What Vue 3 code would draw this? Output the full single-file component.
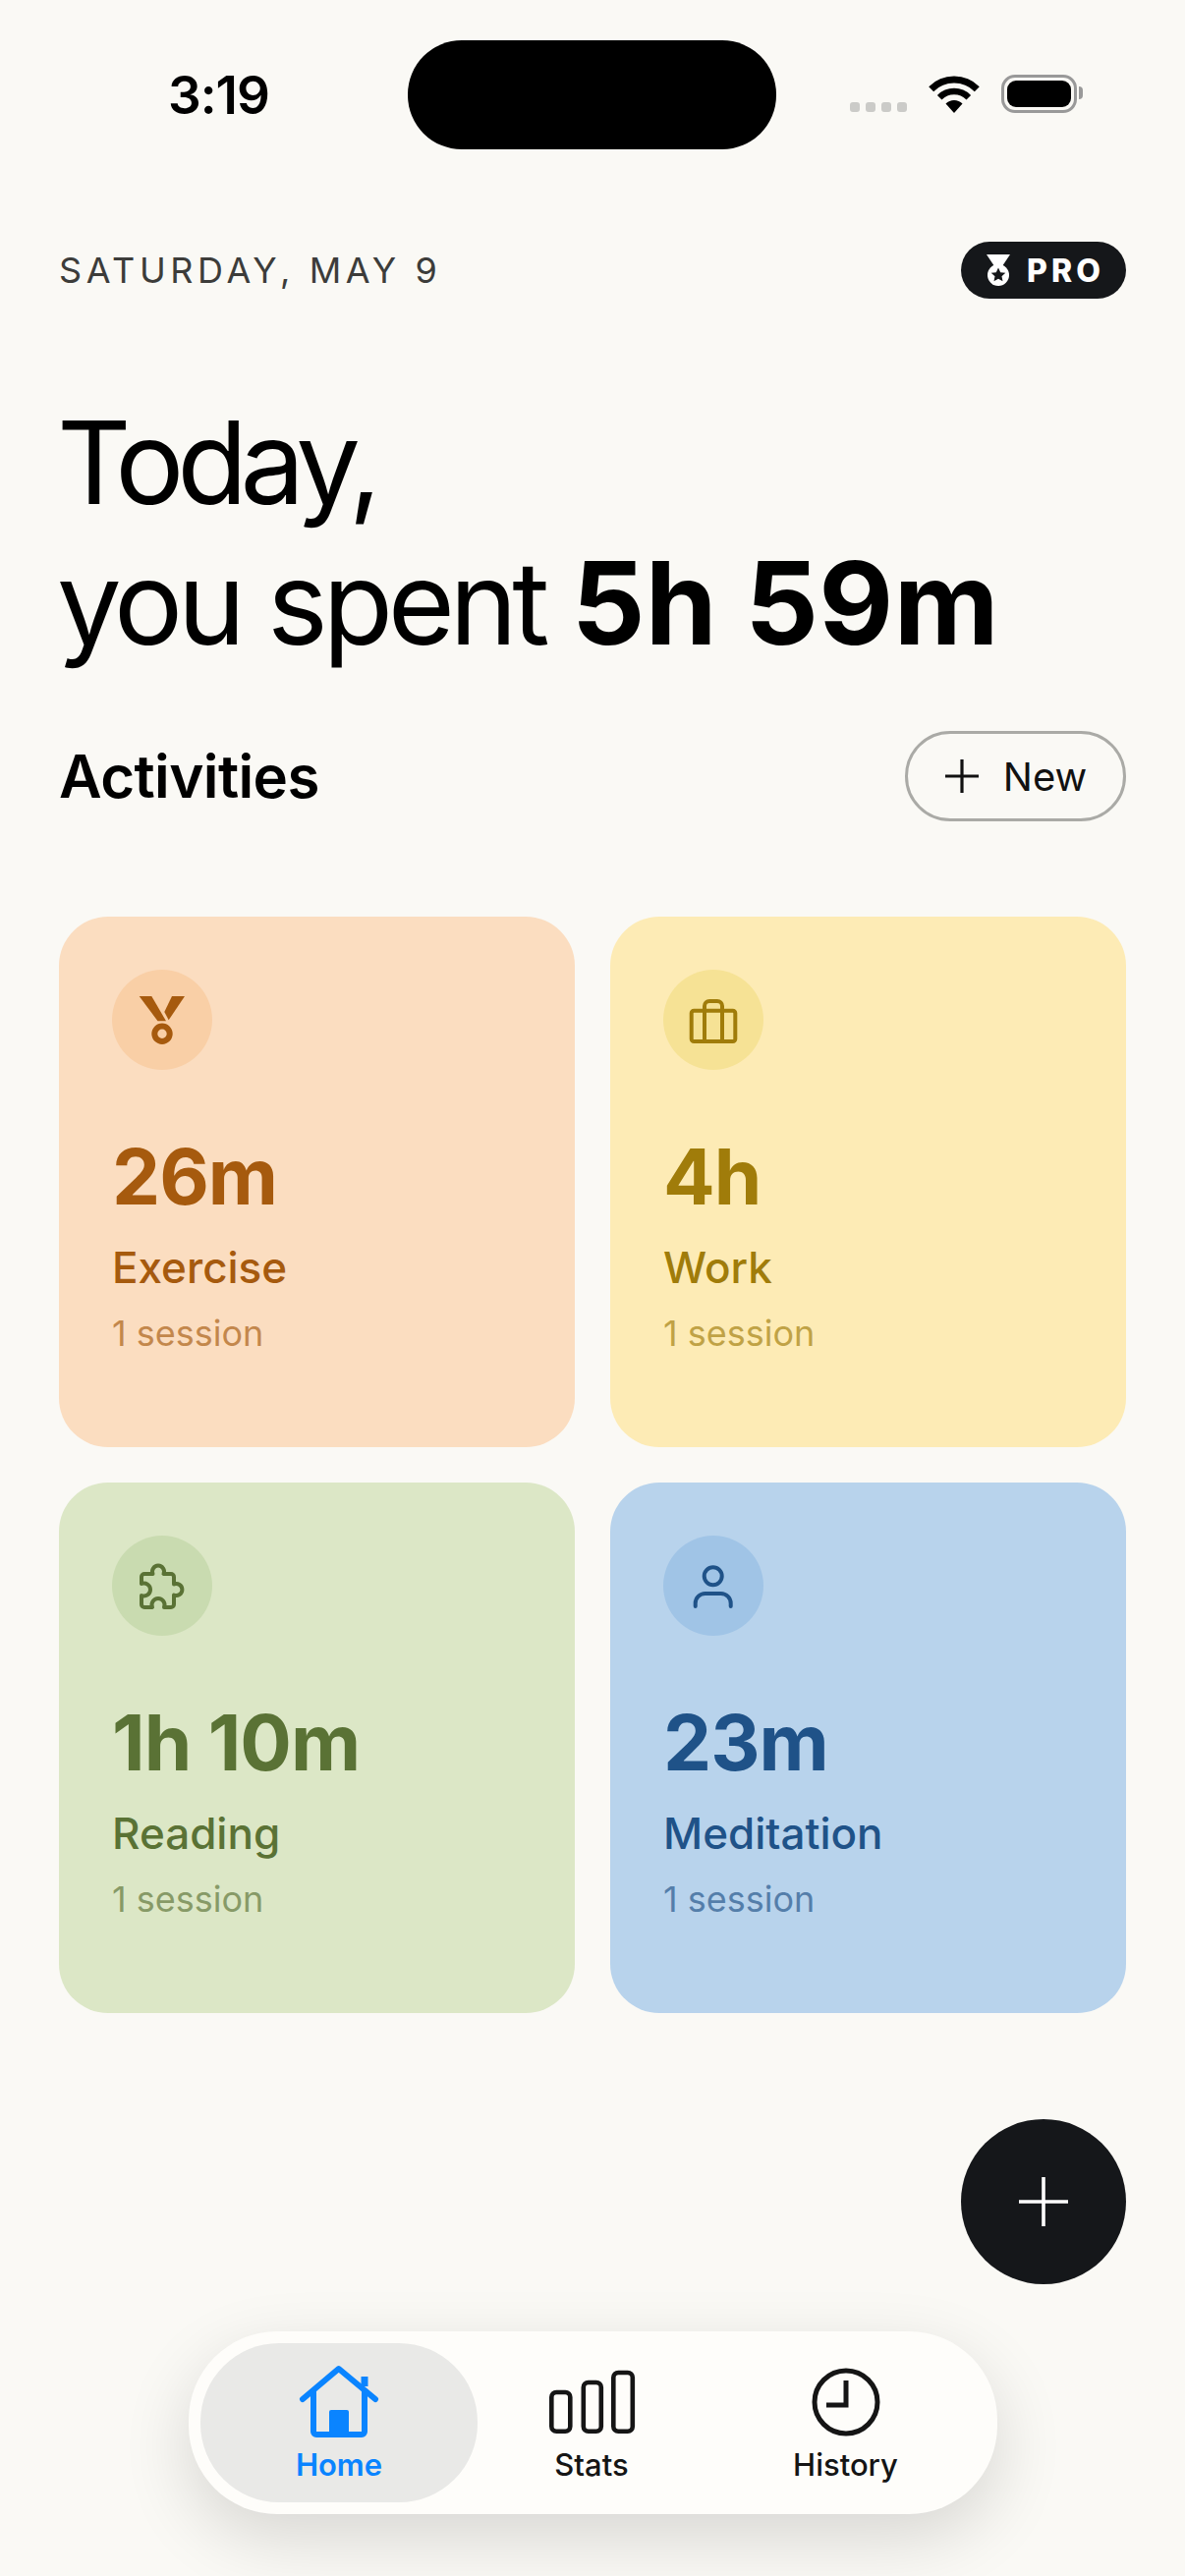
<template>
  <div class="screen">
    <div class="status-bar">
      <span class="time">3:19</span>
      <div class="island"></div>
      <div class="status-right">
        <div class="signal"><i></i><i></i><i></i><i></i></div>
        <svg class="wifi" width="52" height="38" viewBox="0 0 52 38">
          <path d="M2.7 13.7A33 33 0 0 1 49.3 13.7" fill="none" stroke="#000" stroke-width="7" />
          <path d="M11.2 22.2A21 21 0 0 1 40.8 22.2" fill="none" stroke="#000" stroke-width="6.5" />
          <path d="M26 38L17.5 28.5A12 12 0 0 1 34.5 28.5Z" fill="#000" />
        </svg>
        <div class="battery"><div class="battery-level"></div><div class="battery-nub"></div></div>
      </div>
    </div>

    <header class="date-row">
      <span class="date">SATURDAY, MAY 9</span>
      <div class="pro-badge">
        <svg width="24" height="32" viewBox="0 0 24 32">
          <path d="M0 0H24L16 12H8Z" fill="#fff" />
          <circle cx="12" cy="21" r="11" fill="#fff" />
          <path d="M12 13.5l2.2 4.7 5.1.6-3.8 3.4 1 5-4.5-2.5-4.5 2.5 1-5-3.8-3.4 5.1-.6z" fill="#15171a" />
        </svg>
        <span>PRO</span>
      </div>
    </header>

    <h1 class="headline"><span class="today">Today,</span><br />you spent <strong>5h 59m</strong></h1>

    <div class="section-row">
      <h2 class="section-title">Activities</h2>
      <button class="new-btn">
        <svg width="36" height="36" viewBox="0 0 36 36">
          <path d="M18 1V35M1 18H35" stroke="#111" stroke-width="3.2" fill="none" />
        </svg>
        New
      </button>
    </div>

    <div class="cards">
      <div v-for="card in cards" :key="card.name" class="card" :class="card.theme">
        <div class="card-icon">
          <svg v-if="card.theme === 'exercise'" width="60" height="60" viewBox="0 0 60 60">
            <path d="M6.7 6H19.3L34 31.3H25.5Z" fill="currentColor" />
            <path d="M40 6H53L36.7 30.3L32.3 22Z" fill="currentColor" />
            <circle cx="30" cy="44.3" r="7.7" fill="none" stroke="currentColor" stroke-width="6" />
          </svg>
          <svg v-else-if="card.theme === 'work'" width="60" height="60" viewBox="0 0 60 60" fill="none" stroke="currentColor" stroke-width="4">
            <rect x="7.7" y="20.7" width="44.6" height="31.3" rx="2.5" />
            <path d="M21 52V16a5 5 0 0 1 5-5h8a5 5 0 0 1 5 5V52" />
          </svg>
          <svg v-else-if="card.theme === 'reading'" width="60" height="60" viewBox="0 0 60 60" fill="none" stroke="currentColor" stroke-width="4" stroke-linejoin="round">
            <path d="M12 18h8.5a6 6 0 1 1 11 0H39a3 3 0 0 1 3 3v7.5a6 6 0 1 1 0 11V49a3 3 0 0 1-3 3H32a6.5 6.5 0 1 0-12 0H12a3 3 0 0 1-3-3V40a6.5 6.5 0 1 0 0-12V21a3 3 0 0 1 3-3z" />
          </svg>
          <svg v-else width="60" height="60" viewBox="0 0 60 60" fill="none" stroke="currentColor" stroke-width="4" stroke-linecap="round">
            <circle cx="29.7" cy="20.3" r="9" />
            <path d="M11.7 51V48a10 10 0 0 1 10-10h16a10 10 0 0 1 10 10v3" />
          </svg>
        </div>
        <div class="card-value">{{ card.value }}</div>
        <div class="card-name">{{ card.name }}</div>
        <div class="card-sessions">{{ card.sessions }}</div>
      </div>
    </div>

    <button class="fab">
      <svg width="54" height="54" viewBox="0 0 54 54">
        <path d="M27 2V52M2 27H52" stroke="#fff" stroke-width="3.6" fill="none" />
      </svg>
    </button>

    <nav class="tabbar">
      <div class="tab active">
        <svg width="90" height="80" viewBox="0 0 90 80" fill="none" stroke="#0a84ff" stroke-width="6" stroke-linecap="round" stroke-linejoin="round">
          <path d="M8 37L44.7 6L82 37" />
          <path d="M19 30V70a3 3 0 0 0 3 3H68a3 3 0 0 0 3-3V30" />
          <path d="M71 14V24" stroke-linecap="butt" stroke-width="7" />
          <rect x="35" y="48" width="20" height="26" rx="2" fill="#0a84ff" stroke="none" />
        </svg>
        <span>Home</span>
      </div>
      <div class="tab">
        <svg width="95" height="80" viewBox="0 0 95 80" fill="none" stroke="#151515" stroke-width="4.6">
          <rect x="6.3" y="30" width="19" height="39.8" rx="5" />
          <rect x="38.8" y="20" width="18" height="49.8" rx="5" />
          <rect x="69.3" y="10" width="19.5" height="59.8" rx="5" />
        </svg>
        <span>Stats</span>
      </div>
      <div class="tab">
        <svg width="80" height="80" viewBox="0 0 80 80" fill="none" stroke="#151515" stroke-width="5">
          <circle cx="40" cy="40" r="32" />
          <path d="M40 18V43H20" />
        </svg>
        <span>History</span>
      </div>
    </nav>
  </div>
</template>

<script setup>
const cards = [
  { theme: 'exercise', value: '26m', name: 'Exercise', sessions: '1 session' },
  { theme: 'work', value: '4h', name: 'Work', sessions: '1 session' },
  { theme: 'reading', value: '1h 10m', name: 'Reading', sessions: '1 session' },
  { theme: 'meditation', value: '23m', name: 'Meditation', sessions: '1 session' },
]
</script>

<style>
html, body {
  margin: 0;
  background: #faf9f5;
}
</style>

<style scoped>
.screen {
  position: relative;
  width: 1206px;
  height: 2622px;
  overflow: hidden;
  background: #faf9f5;
  font-family: Inter, "Liberation Sans", sans-serif;
  color: #000;
}

.status-bar {
  display: flex;
  align-items: center;
  height: 111px;
  padding: 41px 0 0 171px;
}

.time {
  width: 244px;
  font-size: 53px;
  font-weight: 600;
  letter-spacing: -1px;
}

.island {
  width: 375px;
  height: 111px;
  border-radius: 55px;
  background: #000;
}

.status-right {
  display: flex;
  align-items: flex-end;
  margin-left: 75px;
  margin-top: -3px;
}

.signal {
  display: flex;
  gap: 6px;
  margin-right: 22px;
  margin-bottom: 1px;
}

.signal i {
  width: 10px;
  height: 10px;
  border-radius: 3px;
  background: #cbcbc8;
}

.wifi {
  margin-right: 22px;
}

.battery {
  position: relative;
  box-sizing: border-box;
  width: 77px;
  height: 39px;
  padding: 3px;
  border: 3px solid #999;
  border-radius: 14px;
}

.battery-level {
  height: 100%;
  border-radius: 9px;
  background: #000;
}

.battery-nub {
  position: absolute;
  right: -9px;
  top: 9px;
  width: 4px;
  height: 13px;
  border-radius: 0 4px 4px 0;
  background: #999;
}

.date-row {
  display: flex;
  align-items: center;
  justify-content: space-between;
  height: 58px;
  margin-top: 94px;
  padding: 0 60px;
}

.date {
  font-size: 36px;
  letter-spacing: 4.6px;
  color: #3c3c3a;
}

.pro-badge {
  display: flex;
  align-items: center;
  justify-content: center;
  gap: 17px;
  box-sizing: border-box;
  width: 168px;
  height: 58px;
  padding-left: 4px;
  border-radius: 29px;
  background: #15171a;
  color: #fff;
  font-size: 32px;
  font-weight: 800;
  letter-spacing: 4px;
}

.headline {
  margin: 95px 0 0;
  padding: 0 60px 0 58px;
  font-size: 117px;
  line-height: 143px;
  font-weight: 400;
  letter-spacing: -5.4px;
  white-space: nowrap;
}

.today {
  letter-spacing: -7.2px;
}

.headline strong {
  font-weight: 700;
  letter-spacing: 0.4px;
}

.section-row {
  display: flex;
  align-items: center;
  justify-content: space-between;
  height: 92px;
  margin-top: 59px;
  padding: 0 60px;
}

.section-title {
  margin: 0;
  font-size: 60px;
  font-weight: 600;
  letter-spacing: -0.6px;
}

.new-btn {
  display: flex;
  align-items: center;
  justify-content: center;
  gap: 24px;
  box-sizing: border-box;
  width: 225px;
  height: 92px;
  border: 3px solid #aaaaa6;
  border-radius: 46px;
  background: transparent;
  font-family: inherit;
  font-size: 40px;
  color: #111;
}

.cards {
  display: grid;
  grid-template-columns: 525px 525px;
  grid-auto-rows: 540px;
  gap: 36px;
  margin-top: 97px;
  padding: 0 60px;
}

.card {
  box-sizing: border-box;
  padding: 54px;
  border-radius: 50px;
}

.card-icon {
  display: flex;
  align-items: center;
  justify-content: center;
  width: 102px;
  height: 102px;
  margin-bottom: 63px;
  border-radius: 50%;
}

.card-value {
  font-size: 78px;
  line-height: 92px;
  font-weight: 700;
  letter-spacing: -1px;
}

.card-name {
  margin-top: 19px;
  font-size: 44px;
  line-height: 54px;
  font-weight: 500;
}

.card-sessions {
  margin-top: 18px;
  font-size: 36px;
  line-height: 44px;
  opacity: 0.65;
}

.exercise { background: #fbddc0; color: #a65a0e; }
.exercise .card-icon { background: #f9cfa6; }
.work { background: #fdebb5; color: #a07c0a; }
.work .card-icon { background: #f6e295; }
.reading { background: #dce7c6; color: #5a7235; }
.reading .card-icon { background: #c9dbb0; }
.meditation { background: #b8d3ec; color: #1f5288; }
.meditation .card-icon { background: #a0c4e6; }

.fab {
  position: absolute;
  left: 978px;
  top: 2157px;
  display: flex;
  align-items: center;
  justify-content: center;
  width: 168px;
  height: 168px;
  padding: 0;
  border: 0;
  border-radius: 50%;
  background: #15171a;
}

.tabbar {
  position: absolute;
  left: 192px;
  top: 2373px;
  display: grid;
  grid-template-columns: 282px 232px 285px;
  box-sizing: border-box;
  width: 823px;
  height: 186px;
  padding: 12px;
  border-radius: 90px;
  background: #fefdfa;
  box-shadow: 0 24px 70px rgba(0, 0, 0, 0.14);
}

.tab {
  display: flex;
  flex-direction: column;
  align-items: center;
  padding-top: 20px;
  border-radius: 80px;
  font-size: 31px;
  font-weight: 500;
  color: #151515;
}

.tab svg {
  margin-bottom: 5px;
}

.tab.active {
  background: #e9e9e7;
  font-weight: 600;
  color: #0a84ff;
}
</style>
